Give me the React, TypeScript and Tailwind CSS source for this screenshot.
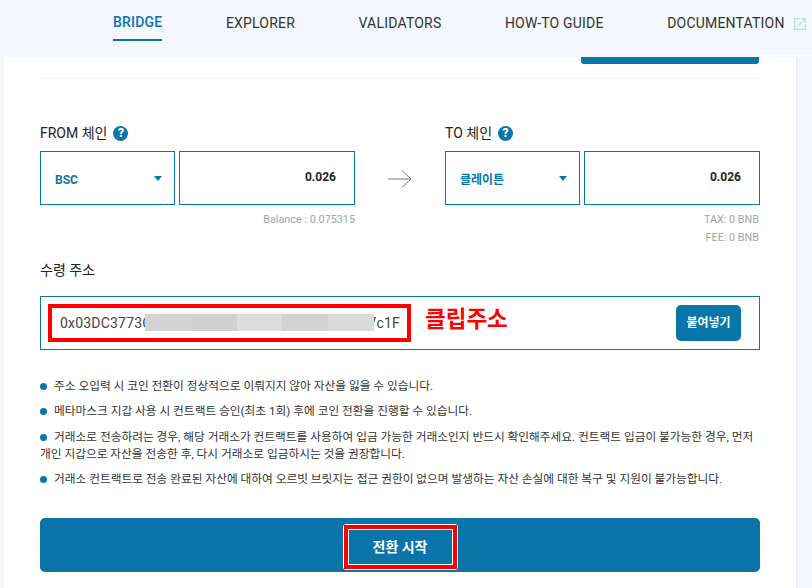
import React from 'react';

const navItems = ['EXPLORER', 'VALIDATORS', 'HOW-TO GUIDE'];

const notices = [
  '주소 오입력 시 코인 전환이 정상적으로 이뤄지지 않아 자산을 잃을 수 있습니다.',
  '메타마스크 지갑 사용 시 컨트랙트 승인(최초 1회) 후에 코인 전환을 진행할 수 있습니다.',
  '거래소로 전송하려는 경우, 해당 거래소가 컨트랙트를 사용하여 입금 가능한 거래소인지 반드시 확인해주세요. 컨트랙트 입금이 불가능한 경우, 먼저 개인 지갑으로 자산을 전송한 후, 다시 거래소로 입금하시는 것을 권장합니다.',
  '거래소 컨트랙트로 전송 완료된 자산에 대하여 오르빗 브릿지는 접근 권한이 없으며 발생하는 자산 손실에 대한 복구 및 지원이 불가능합니다.',
];

const HelpIcon = () => (
  <span className="ml-[6px] flex h-[15px] w-[15px] items-center justify-center rounded-full bg-[#0a75a9] text-[12px] font-black leading-none text-white">
    ?
  </span>
);

const ChainField = ({ label, chain, amount }: { label: string; chain: string; amount: string }) => (
  <div>
    <div className="flex h-[18px] items-center text-[14px] font-normal leading-none text-[#222]">
      {label}
      <HelpIcon />
    </div>
    <div className="mt-[9px] flex gap-[4px]">
      <div className="flex h-[54px] w-[135px] items-center justify-between border border-[#0a75a9] pl-[14px] pr-[12px]">
        <span className="pt-[4px] text-[12px] font-bold text-[#0a75a9]">{chain}</span>
        <span className="h-0 w-0 border-x-[4px] border-t-[5px] border-x-transparent border-t-[#0a75a9]" />
      </div>
      <div className="flex h-[54px] w-[176px] items-center justify-end border border-[#0a75a9] pb-[2px] pr-[18px] text-[12px] font-bold text-[#222]">
        {amount}
      </div>
    </div>
  </div>
);

// five blurred bands over the hidden part of the address
const blurBands = ['bg-[#d3d3d3]', 'bg-[#d0d0cf]', 'bg-[#dcdddd]', 'bg-[#d2d2d2]', 'bg-[#dbdbdd]'];

export default function App() {
  return (
    <div className="h-[588px] w-[812px] overflow-hidden bg-[#f4f7fb] font-['Roboto','Noto_Sans_CJK_KR',sans-serif]">
      <header className="relative flex h-[57px] items-start gap-[63.5px] bg-[#f4f7fb] pl-[113px] text-[14px] tracking-[0.2px] text-[#333]">
        <div className="flex h-[41px] items-center border-b-2 border-[#0a75a9] pt-[6px] font-medium text-[#0a75a9]">BRIDGE</div>
        {navItems.map((item) => (
          <div key={item} className="flex h-[41px] items-center pt-[6px]">
            {item}
          </div>
        ))}
        <div className="flex h-[41px] items-center whitespace-nowrap pt-[6px]">
          DOCUMENTATION
          <svg className="ml-[9px] h-[12px] w-[12px] shrink-0 text-[#a5e8d8]" viewBox="0 0 12 12" fill="none" stroke="currentColor" strokeWidth="1.3">
            <path d="M6 .7H.7v10.6h10.6V6" />
            <path d="M4.5 7.5 11 1M7.5.7h3.8v3.8" />
          </svg>
        </div>
        <div className="absolute right-0 top-[48px] h-px w-[53px] bg-[#edf0f4]" />
      </header>

      <main className="ml-[4px] h-[531px] w-[792px] bg-white px-[36px] shadow-[1px_0_2px_rgba(0,0,0,0.08)]">
        <div className="flex justify-end pr-[1px]">
          <div className="h-[7px] w-[178px] rounded-b-[3px] bg-[#0a75a9]" />
        </div>
        <div className="mt-[14px] border-t border-[#eef0f2]" />

        <div className="mt-[45px] flex">
          <div className="w-[315px]">
            <ChainField label="FROM 체인" chain="BSC" amount="0.026" />
            <div className="mt-[8px] text-right text-[10.8px] leading-[14px] text-[#a0a4ab]">Balance : 0.075315</div>
          </div>
          <div className="flex w-[90px] justify-center pt-[45px]">
            <svg className="h-[20px] w-[26px] text-[#777]" viewBox="0 0 26 20" fill="none" stroke="currentColor" strokeWidth="1">
              <path d="M1 10h23M15 1.5 24 10l-9 8.5" />
            </svg>
          </div>
          <div className="w-[315px]">
            <ChainField label="TO 체인" chain="클레이튼" amount="0.026" />
            <div className="mt-[8px] pr-[1px] text-right text-[10.8px] leading-[18px] text-[#a0a4ab]">
              <div className="-mt-[2px]">TAX: 0 BNB</div>
              <div>FEE: 0 BNB</div>
            </div>
          </div>
        </div>

        <div className="mt-[14px] text-[14px] font-normal leading-[18px] text-[#222]">수령 주소</div>

        <div className="mt-[17px] flex h-[54px] items-center border border-[#0a75a9] pl-[7px] pr-[18px]">
          <div className="relative flex h-[38px] w-[363px] items-center border-[4px] border-[#f00] pl-[8px] text-[14px] tracking-[0.2px] text-[#444]">
            <span className="flex w-full">0x03DC3773C<span className="ml-auto pr-[7px]">7c1F</span></span>
            <div className="absolute left-[93px] top-[6px] flex h-[17px] w-[229px]">
              {blurBands.map((band) => (
                <div key={band} className={`flex-1 ${band}`} />
              ))}
            </div>
          </div>
          <span className="ml-[14px] pb-[7px] text-[22.5px] font-bold leading-none text-[#f00]">클립주소</span>
          <button className="ml-auto h-[36px] w-[65px] rounded-[5px] bg-[#0a75a9] text-[12px] font-bold text-white">붙여넣기</button>
        </div>

        <ul className="mt-[28px] break-keep text-[11.7px] leading-[17px] text-[#333]">
          {notices.map((text) => (
            <li key={text} className="mb-[8.4px]">
              <span className="mr-[7px] inline-block h-[7px] w-[7px] rounded-full bg-[#0a75a9]" />
              {text}
            </li>
          ))}
        </ul>

        <div className="mt-[30px] flex h-[54px] items-center justify-center rounded-[5px] bg-[#0a75a9]">
          <button className="mt-[4px] h-[46px] w-[115px] rounded-[3px] border border-white bg-white p-0">
            <span className="block h-full w-full border-[4px] border-[#f00]">
              <span className="flex h-full w-full items-center justify-center border border-white bg-[#0a75a9] text-[14px] font-bold text-white">
                전환 시작
              </span>
            </span>
          </button>
        </div>
      </main>
    </div>
  );
}
